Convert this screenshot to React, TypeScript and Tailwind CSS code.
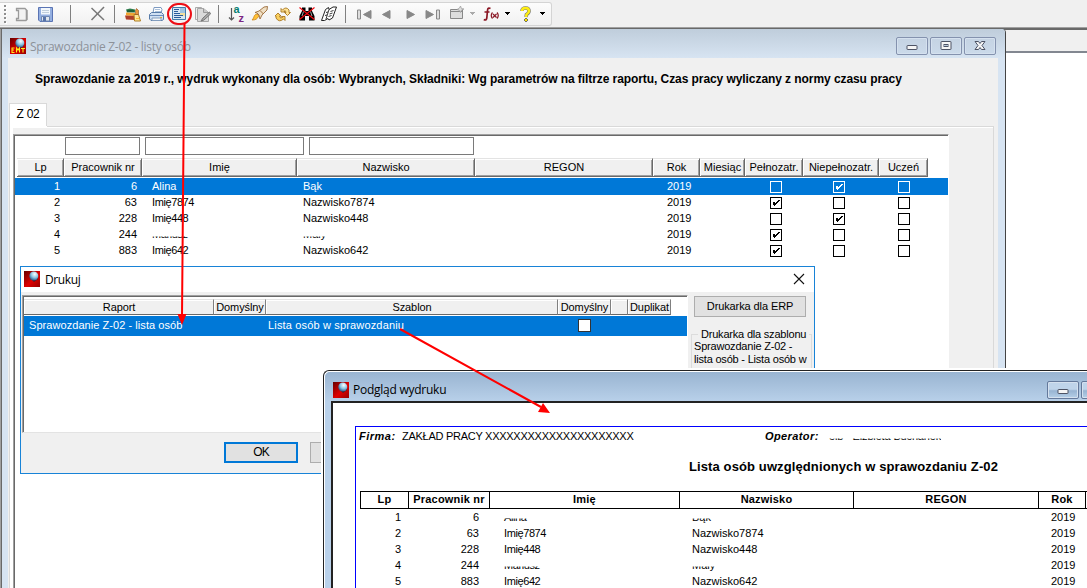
import React from "react";

type Person = { lp: number; nr: number; first: string; last: string; full: boolean; part: boolean; cut?: boolean };

const people: Person[] = [
  { lp: 1, nr: 6, first: "Alina", last: "Bąk", full: false, part: true },
  { lp: 2, nr: 63, first: "Imię7874", last: "Nazwisko7874", full: true, part: false },
  { lp: 3, nr: 228, first: "Imię448", last: "Nazwisko448", full: false, part: true },
  { lp: 4, nr: 244, first: "Mariusz", last: "Mały", full: true, part: false, cut: true },
  { lp: 5, nr: 883, first: "Imię642", last: "Nazwisko642", full: true, part: false },
];

function Ico({ className = "", children }: { className?: string; children: React.ReactNode }) {
  return (
    <svg width="16" height="16" viewBox="0 0 16 16" className={`shrink-0 overflow-visible ${className}`}>
      {children}
    </svg>
  );
}

function Sep({ className = "" }: { className?: string }) {
  return <div className={`h-[18px] w-px shrink-0 bg-[#808080] ${className}`} />;
}

function Caret({ className = "", color = "#000" }: { className?: string; color?: string }) {
  return (
    <svg width="5" height="3" viewBox="0 0 5 3" className={`shrink-0 ${className}`} shapeRendering="crispEdges">
      <path d="M0 0h5v1h-1v1h-1v1h-1v-1h-1v-1h-1z" fill={color} />
    </svg>
  );
}

function Toolbar() {
  return (
    <div className="flex h-[27px] shrink-0 pt-0.5">
      <div className="flex h-6 w-[552px] items-center rounded-r-[3px] border-y border-r border-[#d4d4d4] bg-gradient-to-b from-[#fcfcfc] to-[#f1f1f1]">
        <svg width="4" height="19" viewBox="0 0 4 19" className="ml-1 shrink-0" shapeRendering="crispEdges">
          {[0, 4, 8, 12, 16].map((y) => (
            <g key={y}>
              <rect x="1" y={y + 1} width="2" height="2" fill="#fff" />
              <rect x="0" y={y} width="2" height="2" fill="#8e8e8e" />
            </g>
          ))}
        </svg>
        <Ico className="ml-[6px]">
          <path d="M2.500 2.500H11l2 2v9l-1 1H2.500v-2h2v-8h-2z" fill="#f2f2f2" stroke="#9a9a9a" strokeWidth="1.300" />
          <path d="M12.500 4v10" stroke="#999" strokeWidth="1.600" />
        </Ico>
        <Ico className="ml-2">
          <path d="M.5 1.500h14v14H2l-1.500-1.500z" fill="#94afe0" stroke="#5a74b4" />
          <rect x="3" y="2" width="9" height="6.500" fill="#f2f7fc" />
          <path d="M4 4.500h7M4 6.500h7" stroke="#c1cfdc" />
          <path d="M3.500 15V10.500h8V15z" fill="#e0e6ec" stroke="#6f88b2" />
          <rect x="5" y="11" width="3" height="4" fill="#5873a8" />
        </Ico>
        <Sep className="ml-4" />
        <Ico className="ml-[19px]">
          <path d="M1.500 2l12.500 12" stroke="#777" strokeWidth="1.500" />
          <path d="M14 1L1.500 14" stroke="#777" strokeWidth="1.500" />
        </Ico>
        <Sep className="ml-2" />
        <Ico className="ml-[10px]">
          <path d="M1 3.500l4-1 5 1v3H2z" fill="#2d7c4c" />
          <path d="M2 5h7" stroke="#123e25" />
          <path d="M1 6.500l9 .5v3L1 9.500z" fill="#f1a331" />
          <path d="M0 9.500l10 .5v4L1 13.500z" fill="#ae3e2a" />
          <path d="M9 8.500h4.500l2 6.500h-6z" fill="#ffe694" stroke="#af7f24" />
          <path d="M10.500 8.500V4.500l1-2 2 2v4z" fill="#e6963d" stroke="#915021" strokeWidth=".6" />
          <path d="M11 12.500h3" stroke="#f8be34" />
        </Ico>
        <Ico className="ml-2">
          <path d="M4 7l1-5.500h7l1 2-1 4z" fill="#fff" stroke="#7e9bc2" />
          <path d="M6 3.500h5M6 5.500h6" stroke="#abc1da" />
          <path d="M.5 8.500l2-2h10l2 2v5l-1.500 1H2L.5 13z" fill="#d1e1f3" stroke="#577ba8" />
          <path d="M1 9.500h13" stroke="#6d8dbb" />
          <path d="M3 12h9v2.500H3z" fill="#f8f8f8" stroke="#839dbd" />
          <path d="M11 11.500h2" stroke="#d6ac3d" />
        </Ico>
        <Ico className="ml-[7px]">
          <path d="M.5 1.500h13v12H.5z" fill="#d8e8f4" stroke="#427ba9" />
          <path d="M8 2h5v5H8z" fill="#9dc5e5" />
          <path d="M8 7h5v3H8z" fill="#f3df9e" />
          <path d="M2 3.500h5M2 5.500h4M2 7.500h6M2 9.500h9M2 11.500h7" stroke="#295c9b" />
        </Ico>
        <Ico className="ml-[7px]">
          <path d="M.5 13.500v-12h6l2 2v10z" fill="#eee" stroke="#aaa" />
          <path d="M2.500 15.500V2.500h6l5 4v9z" fill="#dadada" stroke="#a6a6a6" />
          <path d="M8.500 2.500v4h5" fill="#c8c8c8" stroke="#999" />
          <path d="M14.500 6L8 12l-2 3 3-1 6.500-6z" fill="#aaa" stroke="#777" />
        </Ico>
        <Sep className="ml-[7px]" />
        <Ico className="ml-[10px]">
          <path d="M2.500 2v12M0 11.500l2.500 2.500L5 11.500" fill="none" stroke="#555" strokeWidth="1.200" />
          <text x="4.500" y="6.800" fontSize="11" fontWeight="bold" fontFamily="Liberation Sans, sans-serif" fill="#087f72">a</text>
          <text x="9.500" y="15.500" fontSize="11" fontWeight="bold" fontFamily="Liberation Sans, sans-serif" fill="#7c2684">z</text>
        </Ico>
        <Ico className="ml-[7px]">
          <path d="M3 6.500l4-1.500 5-4 3.500-.5-.5 3.500-5 5-2 4-1-4-2-2z" fill="#efdfc3" stroke="#9b6b3a" strokeWidth=".9" />
          <path d="M8 4.500l3.500 3.500" stroke="#a37241" />
          <path d="M5 8c-4 1-2 3-5 6 4 0 5-1 7-4z" fill="#ffc137" stroke="#cc871e" strokeWidth=".8" />
        </Ico>
        <Ico className="ml-[7px]">
          <path d="M6 6V2.500L7.500 4Q11 0 14 4v2.500h1.500L12.500 9.500 9.500 6.500H11Q11 4 8.800 5L10 6z" fill="#ffe293" stroke="#a87620" strokeWidth=".9" />
          <path d="M1 12V10H0L3 7l3 3H4.500Q5 13 7.500 11.500L6.500 10.500H10v4L8.500 13Q4 17 1 12z" fill="#f9cf5e" stroke="#a87620" strokeWidth=".9" />
        </Ico>
        <Ico className="ml-2">
          <path d="M3 1.500h3.500V5h3V1.500H13V5l2.500 5v4.500H10V10H6v4.500H.5V10L3 5z" fill="#000" />
          <path d="M4.500 5.500L3 10M11.500 5.500L13 10" stroke="#ccc" strokeWidth=".8" />
          <path d="M.5 1.500l15 12M15.500 1.500l-15 12" stroke="#f00a10" strokeWidth="1.200" />
        </Ico>
        <Ico className="ml-[6px]">
          <path d="M4.500 3.500l3-2 .5 2 4-2.500h3.500L11.500 12 8 14l-1-1.500L3.500 14.500H.5z" fill="#fff" stroke="#222" strokeWidth="1" />
          <path d="M8 3.500L5 13M7 6l-2 .5M6 9l-2 .5M9.500 5.500l3-1M8.500 8l3-1M7.500 10.500l3-1" stroke="#222" strokeWidth=".9" />
        </Ico>
        <Sep className="ml-2" />
        <Ico className="ml-[11px]">
          <path d="M.5 4h3v9h-3z" fill="#ddd" stroke="#888" />
          <path d="M6.500 8.500l7.500-4v8z" fill="#888" stroke="#888" />
        </Ico>
        <Ico className="ml-[7px]"><path d="M2.500 8.500l7.500-4v8z" fill="#888" stroke="#888" /></Ico>
        <Ico className="ml-[7px]"><path d="M11.500 8.500L4 4.500v8z" fill="#888" stroke="#888" /></Ico>
        <Ico className="ml-[6px]">
          <path d="M8.500 8.500L1 4.500v8z" fill="#888" stroke="#888" />
          <path d="M11.500 4h3v9h-3z" fill="#ddd" stroke="#888" />
        </Ico>
        <Ico className="ml-[9px]">
          <path d="M.5 3.500h12v9H.5z" fill="#ddd" stroke="#888" />
          <path d="M1 5.500h11" stroke="#888" />
          <path d="M10.500 0l1 2.500L14 3l-2.500 1-1 2.500L9 4 7 3.500 9.500 2z" fill="#ddd" stroke="#999" strokeWidth=".7" />
        </Ico>
        <Caret className="mb-0.5 ml-1" color="#aaa" />
        <svg width="17" height="16" viewBox="0 0 17 16" className="ml-[8px] shrink-0">
          <path d="M7.500 2.500Q4.800 1 4.500 4.500L3.800 12Q3.300 15 .8 13.500M1.500 6h5" fill="none" stroke="#8a1724" strokeWidth="1.700" />
          <path d="M9.500 6.500Q7 9.500 9.500 12.500M14 6.500Q16.500 9.500 14 12.500M10 8l3.500 3.500M13.500 8L10 11.500" fill="none" stroke="#8a1724" strokeWidth="1.200" />
        </svg>
        <Caret className="mb-0.5 ml-[5px]" />
        <Ico className="ml-2">
          <path d="M4 5Q4 2 7.500 2T11 5Q11 7 8.500 8.500L8 11" fill="none" stroke="#777" strokeWidth="3.600" />
          <path d="M4 5Q4 2 7.500 2T11 5Q11 7 8.500 8.500L8 11" fill="none" stroke="#ffee12" strokeWidth="2.500" />
          <path d="M8 12l2 2-2 2-2-2z" fill="#ffe500" stroke="#555" strokeWidth=".8" />
        </Ico>
        <Caret className="mb-0.5 ml-[6px]" />
      </div>
    </div>
  );
}

function AppIcon({ label = false, className = "" }: { label?: boolean; className?: string }) {
  return (
    <Ico className={className}>
      <defs>
        <linearGradient id="app-red" x1="0" y1="0" x2="1" y2="1">
          <stop offset="0" stopColor="#660000" />
          <stop offset=".55" stopColor="#df0000" />
          <stop offset="1" stopColor="#970000" />
        </linearGradient>
        <radialGradient id="app-globe" cx=".6" cy=".3" r=".7">
          <stop offset="0" stopColor="#fff" />
          <stop offset=".55" stopColor="#8cc6e4" />
          <stop offset="1" stopColor="#2f5c8a" />
        </radialGradient>
      </defs>
      <rect width="16" height="16" fill="url(#app-red)" />
      <path d="M6 7l4 4 4-3-3-4z" fill="#491b27" />
      <circle cx="9.800" cy="5" r="4.500" fill="url(#app-globe)" />
      {label && (
        <path d="M4.500 10H2v4.500h2.500M2 12h2M6.500 14.500V10L8 12l1.500-2v4.500M11 10.500h4M13 10v4.500" fill="none" stroke="#ffec1c" strokeWidth="1.100" />
      )}
    </Ico>
  );
}

function CaptionButton({ kind, active = false }: { kind: "min" | "max" | "close"; active?: boolean }) {
  return (
    <div
      className={`flex h-[18px] w-8 shrink-0 items-center justify-center rounded-[2px] border shadow-[inset_0_0_0_1px_#d5e1ef] ${
        active
          ? "border-[#64799b] bg-gradient-to-b from-[#bfd4ea] from-45% via-[#98b4d2] via-55% to-[#b6d0e8]"
          : "border-[#8492ae] bg-gradient-to-b from-[#c5d3e3] to-[#cbdaea]"
      }`}
    >
      <svg width="12" height="10" viewBox="0 0 12 10">
        {kind === "min" && <rect x="1" y="4.500" width="10" height="4" rx=".5" fill="#f5f5f5" stroke="#4d5365" />}
        {kind === "max" && (
          <>
            <rect x="1" y=".5" width="10" height="8" rx=".5" fill="#f5f5f5" stroke="#4d5365" />
            <rect x="4" y="3.500" width="4" height="2" fill="#b8c8da" stroke="#4d5365" />
          </>
        )}
        {kind === "close" && (
          <path d="M1 .5h3.500L6 2.500 7.500.5H11L8 4.500l3 4H7.500L6 6.500l-1.500 2H1l3-4z" fill="#f5f5f5" stroke="#4d5365" strokeWidth="1" />
        )}
      </svg>
    </div>
  );
}

function Check({ on = false, light = false }: { on?: boolean; light?: boolean }) {
  const color = light ? "#fff" : "#000";
  return (
    <svg width="12" height="12" viewBox="0 0 12 12" shapeRendering="crispEdges">
      <rect x=".5" y=".5" width="11" height="11" fill={light ? "#0078d7" : "#fff"} stroke={color} />
      {on && <path d="M3 5h2v1h1v-1h1v-1h1v-1h2v1h-1v1h-1v1h-1v1h-1v1h-1v1h-1v-1h-1z" fill={color} />}
    </svg>
  );
}

const gridCols = "grid grid-cols-[47px_78px_155px_178px_178px_47px_45px_58px_76px_49px]";

function MainGrid() {
  const heads = ["Lp", "Pracownik nr", "Imię", "Nazwisko", "REGON", "Rok", "Miesiąc", "Pełnozatr.", "Niepełnozatr.", "Uczeń"];
  return (
    <div className="mt-1.5 flex w-[936px] flex-1 flex-col border-t border-l border-[#a0a0a0] border-r border-r-white">
      <div className="flex-1 border-t border-l border-[#696969] bg-white">
        <div className="flex pt-px pl-[50px]">
          <div className="h-[18px] w-[75px] border border-[#7a7a7a]" />
          <div className="ml-[5px] h-[18px] w-[159px] border border-[#7a7a7a]" />
          <div className="ml-[5px] h-[18px] w-[165px] border border-[#7a7a7a]" />
        </div>
        <div className={`${gridCols} mt-[3px] ml-0.5 h-[19px] w-[911px]`}>
          {heads.map((h) => (
            <div key={h} className="flex items-center justify-center border-t border-r border-b border-t-[#e3e3e3] border-r-[#696969] border-b-[#696969] bg-[#f0f0f0] pl-px shadow-[inset_1px_1px_0_#fff,inset_-1px_-1px_0_#a0a0a0]">
              {h}
            </div>
          ))}
        </div>
        <div className="pt-px">
          {people.map((p, i) => (
            <div key={p.lp} className={i === 0 ? "-mb-px h-[17px] bg-[#0078d7] text-white" : "h-4"}>
              <div className={`${gridCols} ml-0.5 h-4 w-[911px] items-center`}>
                <div className="pr-1 text-right">{p.lp}</div>
                <div className="pr-[5px] text-right">{p.nr}</div>
                <div className={`pl-[10px] ${i ? "tracking-[-0.4px]" : ""} ${p.cut ? "[clip-path:inset(9px_0_0_0)]" : ""}`}>{p.first}</div>
                <div className={`pl-[6px] ${p.cut ? "[clip-path:inset(9px_0_0_0)]" : ""}`}>{p.last}</div>
                <div />
                <div className="pl-[14px]">2019</div>
                <div />
                <div className="flex pt-0.5 pl-[25px]"><Check on={p.full} light={i === 0} /></div>
                <div className="flex pt-0.5 pl-[30px]"><Check on={p.part} light={i === 0} /></div>
                <div className="flex pt-0.5 pl-[19px]"><Check light={i === 0} /></div>
              </div>
            </div>
          ))}
        </div>
      </div>
    </div>
  );
}

function ReportWindow() {
  return (
    <div className="absolute top-[29px] left-0 flex h-[559px] w-[1006px] flex-col rounded-tr-[4px] border-r border-[#444] bg-[#d7e4f2] shadow-[inset_1px_0_0_#a0a0a0,inset_2px_0_0_#696969]">
      <div className="ml-0.5 flex h-[29px] shrink-0 items-center rounded-tr-[4px] bg-gradient-to-b from-[#bfcddb] to-[#d7e4f2] pt-[5px] pr-[9px] pl-2">
        <AppIcon label />
        <div className="ml-1 flex-1 font-['Open_Sans',sans-serif] text-[12px] tracking-[-0.28px] text-[#8d9299]">Sprawozdanie Z-02 - listy osób</div>
        <div className="flex gap-0.5">
          <CaptionButton kind="min" />
          <CaptionButton kind="max" />
          <CaptionButton kind="close" />
        </div>
      </div>
      <div className="mr-[7px] ml-2 flex flex-1 flex-col bg-[#f0f0f0]">
        <div className="h-[45px] pt-[13px] pl-[27px] text-[12px] leading-4 font-bold tracking-[-0.072px] whitespace-nowrap">
          Sprawozdanie za 2019 r., wydruk wykonany dla osób: Wybranych, Składniki: Wg parametrów na filtrze raportu, Czas pracy wyliczany z normy czasu pracy
        </div>
        <div className="flex h-[23px]">
          <div className="ml-px h-6 w-[38px] border border-b-0 border-[#d9d9d9] bg-white pt-0.5 text-center text-[12px] leading-4 tracking-[-0.3px]">Z 02</div>
        </div>
        <div className="mr-1 ml-px flex flex-1 flex-col border-x border-[#d9d9d9] bg-white">
          <div className="ml-[37px] h-px bg-[#d9d9d9]" />
          <div className="mt-px ml-[3px] flex flex-1 flex-col bg-[#f0f0f0]">
            <MainGrid />
          </div>
        </div>
      </div>
    </div>
  );
}

function PrintDialog() {
  const heads = ["Raport", "Domyślny", "Szablon", "Domyślny", "", "Duplikat"];
  return (
    <div className="absolute top-[266px] left-5 flex h-[208px] w-[795px] flex-col border border-[#1883d7] bg-[#f0f0f0]">
      <div className="flex h-[25px] shrink-0 items-center bg-white pr-[9px] pb-px pl-[3px]">
        <AppIcon />
        <div className="ml-[5px] flex-1 font-['Open_Sans',sans-serif] text-[12px] tracking-[-0.4px]">Drukuj</div>
        <svg width="12" height="12" viewBox="0 0 12 12"><path d="M1 1l10 10M11 1L1 11" stroke="#111" strokeWidth="1.100" /></svg>
      </div>
      <div className="flex">
        <div className="mt-[3px] ml-px h-[138px] w-[666px] border-t border-l border-t-[#a0a0a0] border-r border-r-white border-b border-b-[#e3e3e3] border-l-[#a0a0a0]">
          <div className="h-full border-t border-l border-[#696969] bg-white">
            <div className="mt-0.5 grid h-4 w-[647px] grid-cols-[190px_52px_292px_53px_17px_43px]">
              {heads.map((h, i) => (
                <div key={i} className="flex items-center justify-center border-t border-r border-b border-t-[#e3e3e3] border-r-[#808080] border-b-[#696969] bg-[#f0f0f0] pl-px tracking-[-0.1px] whitespace-nowrap shadow-[inset_1px_1px_0_#fff]">
                  {h}
                </div>
              ))}
            </div>
            <div className="mt-px grid h-5 grid-cols-[244px_309px_1fr] items-center bg-[#0078d7] text-white">
              <div className="pb-px pl-[5px] tracking-[0.06px]">Sprawozdanie Z-02 - lista osób</div>
              <div className="pb-px tracking-[0.16px]">Lista osób w sprawozdaniu</div>
              <div className="mb-0.5 ml-px h-[13px] w-[13px] border border-[#333] bg-white" />
            </div>
          </div>
        </div>
        <div className="ml-[3px] flex w-[121px] flex-col pt-1">
          <div className="ml-[3px] flex h-[21px] w-28 items-center justify-center border border-[#adadad] bg-[#e1e1e1] tracking-[-0.1px]">Drukarka dla ERP</div>
          <fieldset className="mt-[11px] h-[80px] w-[121px] border border-[#dcdcdc] pl-[2px] leading-[13px] tracking-[-0.2px] whitespace-nowrap">
            <legend className="ml-1 px-[3px]">Drukarka dla szablonu</legend>
            <div className="-mt-px">Sprawozdanie Z-02 -</div>
            <div>lista osób - Lista osób w</div>
          </fieldset>
        </div>
      </div>
      <div className="mt-[9px] ml-[203px] flex">
        <div className="flex h-[21px] w-[74px] items-center justify-center border-2 border-[#0078d7] bg-[#e1e1e1] text-[12px] tracking-[-0.8px]">OK</div>
        <div className="ml-3 h-[21px] w-[74px] border border-[#adadad] bg-[#e1e1e1]" />
      </div>
    </div>
  );
}

function PreviewWindow() {
  const cols = "grid grid-cols-[48px_81px_190px_174px_185px_47px_20px]";
  const heads = ["Lp", "Pracownik nr", "Imię", "Nazwisko", "REGON", "Rok", ""];
  return (
    <div className="absolute top-[368px] left-[321px] h-[220px] w-[766px] overflow-hidden bg-white pt-0.5 pl-0.5">
      <div className="flex h-[240px] w-[820px] flex-col rounded-tl-[6px] border-t border-l border-[#222] bg-[#b9d1ea] shadow-[inset_1px_1px_0_#fff]">
        <div className="mt-px ml-px flex h-[30px] shrink-0 items-center rounded-tl-[5px] bg-gradient-to-b from-[#99b4d1] to-[#b9d1ea] pt-[5px] pl-2">
          <AppIcon />
          <div className="ml-1 w-[694px] font-['Open_Sans',sans-serif] text-[12px] tracking-[-0.25px]">Podgląd wydruku</div>
          <div className="flex gap-0.5">
            <CaptionButton kind="min" active />
            <CaptionButton kind="max" active />
          </div>
        </div>
        <div className="-mt-px ml-[7px] flex-1 border-t-2 border-l-2 border-[#222] bg-white pt-[23px] pl-[22px]">
          <div className="h-full border-t border-l border-[#0000ff] pl-1">
            <div className="flex h-[18px] items-center whitespace-nowrap">
              <div className="-ml-px w-[43px] font-bold tracking-[0.5px] italic">Firma:</div>
              <div className="w-[363px] tracking-[-0.27px]">ZAKŁAD PRACY XXXXXXXXXXXXXXXXXXXXX</div>
              <div className="w-[64px] font-bold tracking-[0.4px] italic">Operator:</div>
              <div className="tracking-[-0.15px] [clip-path:inset(9px_0_0_0)]">elb - Elżbieta Buchanek</div>
            </div>
            <div className="mt-[14px] ml-[329px] text-[13px] leading-4 font-bold tracking-[0.11px] whitespace-nowrap">Lista osób uwzględnionych w sprawozdaniu Z-02</div>
            <div className={`${cols} mt-4 h-[18px] w-[746px] border-y border-l border-black font-bold`}>
              {heads.map((h, i) => (
                <div key={i} className="flex items-center justify-center border-r border-black pb-px tracking-[0.2px]">{h}</div>
              ))}
            </div>
            {people.map((p, i) => {
              const cut = i === 0 || p.cut ? "[clip-path:inset(8px_0_0_0)]" : "";
              return (
                <div key={p.lp} className={`${cols} h-4 w-[746px] items-center`}>
                  <div className="pr-[7px] text-right">{p.lp}</div>
                  <div className="pr-[10px] text-right">{p.nr}</div>
                  <div className={`pl-[15px] tracking-[-0.4px] ${cut}`}>{p.first}</div>
                  <div className={`pl-[13px] ${cut}`}>{p.last}</div>
                  <div />
                  <div className="pl-[13px]">2019</div>
                </div>
              );
            })}
          </div>
        </div>
      </div>
    </div>
  );
}

export default function App() {
  return (
    <div className="relative flex h-[588px] w-[1087px] flex-col overflow-hidden bg-[#f0f0f0] font-['Liberation_Sans',Arial,sans-serif] text-[11px] leading-[13px] text-black">
      <Toolbar />
      <div className="flex flex-1 flex-col border-t border-[#a0a0a0]">
        <div className="h-[25px] shrink-0 border-t-2 border-b-2 border-t-[#696969] border-b-[#828790]" />
        <div className="flex-1 bg-white" />
      </div>
      <ReportWindow />
      <PrintDialog />
      <PreviewWindow />
      <svg width="1087" height="588" className="pointer-events-none absolute inset-0" fill="none">
        <rect x="168" y="4" width="23" height="20" rx="10" stroke="#ed0e16" strokeWidth="2" />
        <path d="M184.500 24L182 316M400 329L541 407" stroke="#f00" strokeWidth="2" />
        <path d="M177.500 314h9L182 325zM543 403l7 10-12-1z" fill="#f00" />
      </svg>
    </div>
  );
}
